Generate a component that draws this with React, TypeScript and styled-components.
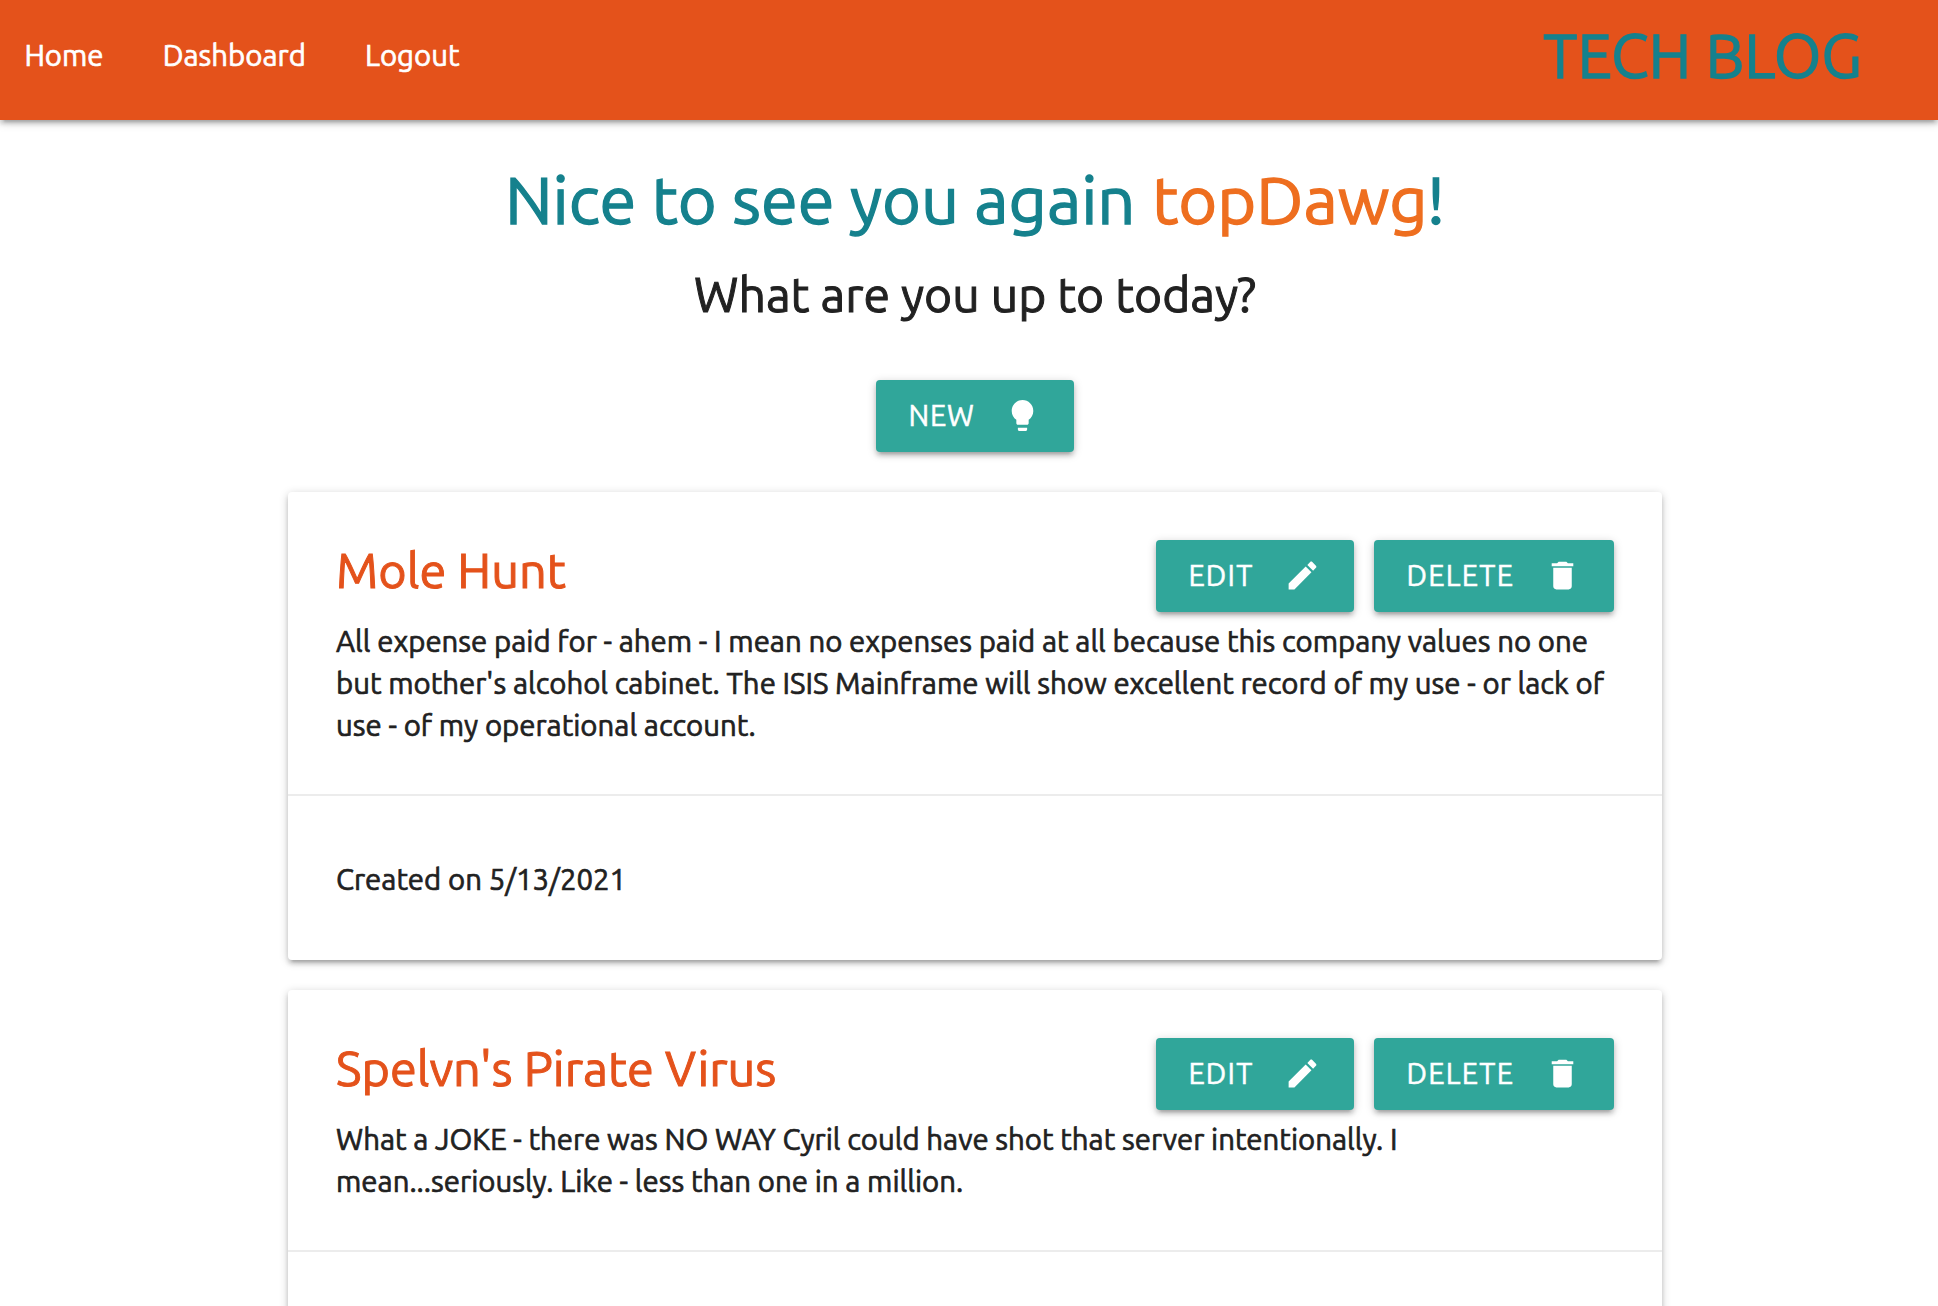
import React from "react";
import styled, { createGlobalStyle } from "styled-components";

const ORANGE = "#e4521b";
const TEAL = "#15818d";
const INK = "#212121";

const GlobalStyle = createGlobalStyle`
  * { box-sizing: border-box; }
  body {
    margin: 0;
    background: #fff;
    color: ${INK};
    font: 400 29.36px/42px Ubuntu, "Noto Sans", sans-serif;
    -webkit-text-stroke: 0.7px currentColor;
  }
  h1, h2, h3, p, ul { margin: 0; padding: 0; font-weight: 400; }
`;

const depth = `
  box-shadow: 0 4px 4px 0 rgba(0, 0, 0, 0.14), 0 6px 2px -4px rgba(0, 0, 0, 0.12),
    0 2px 10px 0 rgba(0, 0, 0, 0.2);
`;

const Page = styled.div`
  height: 1306px;
  overflow: hidden;
`;

const Nav = styled.nav`
  display: flex;
  justify-content: space-between;
  height: 120px;
  padding: 0 76px 0 24.4px;
  line-height: 111px;
  background: ${ORANGE};
  ${depth}
`;

const NavLinks = styled.ul`
  display: flex;
  list-style: none;
`;

const NavItem = styled.li`
  margin-right: 59.2px;
  color: #fff;
  white-space: nowrap;
`;

const Logo = styled.a`
  color: ${TEAL};
  font-size: 61.4px;
  white-space: nowrap;
  -webkit-text-stroke-width: 1.3px;
`;

const Main = styled.main`
  width: 1374px;
  margin-left: 288px;
  padding-top: 43.5px;
  display: flex;
  flex-direction: column;
  align-items: center;
`;

const Greeting = styled.h1`
  color: ${TEAL};
  font-size: 66.7px;
  line-height: 72px;
  white-space: nowrap;
  -webkit-text-stroke-width: 1.3px;
`;

const UserName = styled.span`
  margin: 0 -1px 0 1.5px;
  color: #ee6e1f;
`;

const Prompt = styled.h2`
  margin: 32.5px 0 60px;
  font-size: 48.1px;
  line-height: 52px;
  white-space: nowrap;
  -webkit-text-stroke-width: 1px;
`;

const Button = styled.button<{ $width: number; $spacing: number }>`
  display: flex;
  align-items: center;
  justify-content: space-between;
  width: ${(p) => p.$width}px;
  height: 72px;
  padding: 0 32.7px 1px 32.4px;
  border: 0;
  border-radius: 4px;
  background: #30a69a;
  color: #fff;
  font: inherit;
  font-size: 29px;
  line-height: 71px;
  letter-spacing: ${(p) => p.$spacing}px;
  -webkit-text-stroke-width: 0.5px;
  ${depth}
`;

const Icon = styled.svg`
  width: 37px;
  height: 37px;
  fill: currentColor;
`;

const Posts = styled.section`
  display: flex;
  flex-direction: column;
  gap: 30px;
  width: 100%;
  margin-top: 40px;
`;

const Card = styled.article`
  border-radius: 4px;
  background: #fff;
  ${depth}
`;

const CardContent = styled.div`
  padding: 48px 48px 47.5px;
`;

const CardHeader = styled.header`
  display: flex;
  justify-content: space-between;
  align-items: flex-start;
  margin-bottom: 8.5px;
`;

const CardTitle = styled.h3`
  color: ${ORANGE};
  font-size: 48.6px;
  line-height: 60px;
  white-space: nowrap;
  -webkit-text-stroke-width: 1px;
`;

const Actions = styled.div`
  display: flex;
  gap: 20px;
`;

const Body = styled.p`
  white-space: pre-line;
`;

const CardFooter = styled.footer`
  height: 166px;
  padding: 62.5px 48px 0;
  border-top: 2px solid rgba(160, 160, 160, 0.2);
`;

const paths = {
  bulb: "M9 21c0 .55.45 1 1 1h4c.55 0 1-.45 1-1v-1H9v1zm3-19C8.14 2 5 5.14 5 9c0 2.38 1.19 4.47 3 5.74V17c0 .55.45 1 1 1h6c.55 0 1-.45 1-1v-2.26c1.81-1.27 3-3.36 3-5.74 0-3.86-3.14-7-7-7z",
  edit: "M3 17.25V21h3.75L17.81 9.94l-3.75-3.75L3 17.25zM20.71 7.04c.39-.39.39-1.02 0-1.41l-2.34-2.34c-.39-.39-1.02-.39-1.41 0l-1.83 1.83 3.75 3.75 1.83-1.83z",
  trash: "M6 19c0 1.1.9 2 2 2h8c1.1 0 2-.9 2-2V7H6v12zM19 4h-3.5l-1-1h-5l-1 1H5v2h14V4z",
};

function ActionButton(props: { label: string; icon: keyof typeof paths; width: number; spacing: number }) {
  return (
    <Button $width={props.width} $spacing={props.spacing}>
      <span>{props.label}</span>
      <Icon viewBox="0 0 24 24" aria-hidden="true">
        <path d={paths[props.icon]} />
      </Icon>
    </Button>
  );
}

type Post = { title: string; body: string; date?: string };

const posts: Post[] = [
  {
    title: "Mole Hunt",
    body: `All expense paid for - ahem - I mean no expenses paid at all because this company values no one
but mother's alcohol cabinet. The ISIS Mainframe will show excellent record of my use - or lack of
use - of my operational account.`,
    date: "5/13/2021",
  },
  {
    title: "Spelvn's Pirate Virus",
    body: `What a JOKE - there was NO WAY Cyril could have shot that server intentionally. I
mean...seriously. Like - less than one in a million.`,
  },
];

export default function App() {
  return (
    <Page>
      <GlobalStyle />
      <Nav>
        <NavLinks>
          <NavItem>Home</NavItem>
          <NavItem>Dashboard</NavItem>
          <NavItem>Logout</NavItem>
        </NavLinks>
        <Logo>TECH BLOG</Logo>
      </Nav>
      <Main>
        <Greeting>
          Nice to see you again <UserName>topDawg</UserName>!
        </Greeting>
        <Prompt>What are you up to today?</Prompt>
        <ActionButton label="NEW" icon="bulb" width={198} spacing={0.8} />
        <Posts>
          {posts.map((post) => (
            <Card key={post.title}>
              <CardContent>
                <CardHeader>
                  <CardTitle>{post.title}</CardTitle>
                  <Actions>
                    <ActionButton label="EDIT" icon="edit" width={198} spacing={1.2} />
                    <ActionButton label="DELETE" icon="trash" width={240} spacing={1.3} />
                  </Actions>
                </CardHeader>
                <Body>{post.body}</Body>
              </CardContent>
              <CardFooter>{post.date && <p>Created on {post.date}</p>}</CardFooter>
            </Card>
          ))}
        </Posts>
      </Main>
    </Page>
  );
}
